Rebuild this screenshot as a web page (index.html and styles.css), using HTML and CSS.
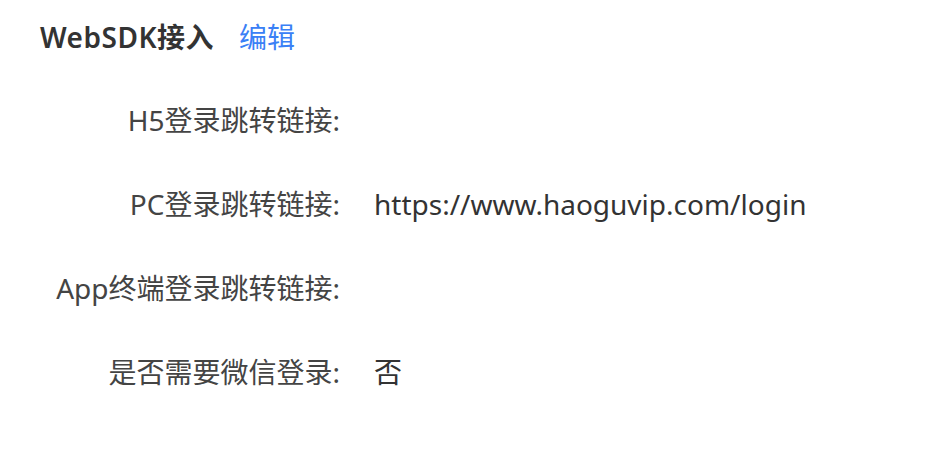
FILE: index.html
```html
<!DOCTYPE html>
<html lang="zh-CN">

<head>
    <meta charset="UTF-8">
    <meta name="viewport" content="width=device-width, initial-scale=1.0">
    <title>WebSDK接入</title>
    <link rel="stylesheet" href="styles.css">
</head>

<body>
    <div class="panel">
        <div class="panel-title">
            <span class="title-text">WebSDK接入</span>
            <a class="edit-link" href="#">编辑</a>
        </div>

        <div class="info-list">
            <div class="info-row">
                <div class="info-label">H5登录跳转链接:</div>
                <div class="info-value"></div>
            </div>
            <div class="info-row">
                <div class="info-label">PC登录跳转链接:</div>
                <div class="info-value">https://www.haoguvip.com/login</div>
            </div>
            <div class="info-row">
                <div class="info-label">App终端登录跳转链接:</div>
                <div class="info-value"></div>
            </div>
            <div class="info-row">
                <div class="info-label">是否需要微信登录:</div>
                <div class="info-value">否</div>
            </div>
        </div>
    </div>
</body>
</html>
```

FILE: styles.css
```css
body {
    font-family: 'Noto Sans', 'Noto Sans CJK SC', sans-serif;
    margin: 0;
    padding: 0;
    background-color: #FFFFFF;
    color: #333333;
}

.panel {
    padding: 19px 40px;
}

.panel-title {
    display: flex;
    align-items: center;
    gap: 25px;
    height: 36px;
    font-size: 28px;
    line-height: 36px;
}

.title-text {
    font-weight: 600;
    letter-spacing: 0.5px;
    color: #333333;
}

.edit-link {
    color: #3A80F6;
    text-decoration: none;
}

.info-list {
    margin-top: 23px;
}

.info-row {
    display: flex;
    align-items: center;
    height: 84px;
    font-size: 28px;
    line-height: 36px;
}

.info-label {
    width: 300px;
    text-align: right;
    color: #444444;
}

.info-value {
    margin-left: 34px;
    color: #333333;
}
```
